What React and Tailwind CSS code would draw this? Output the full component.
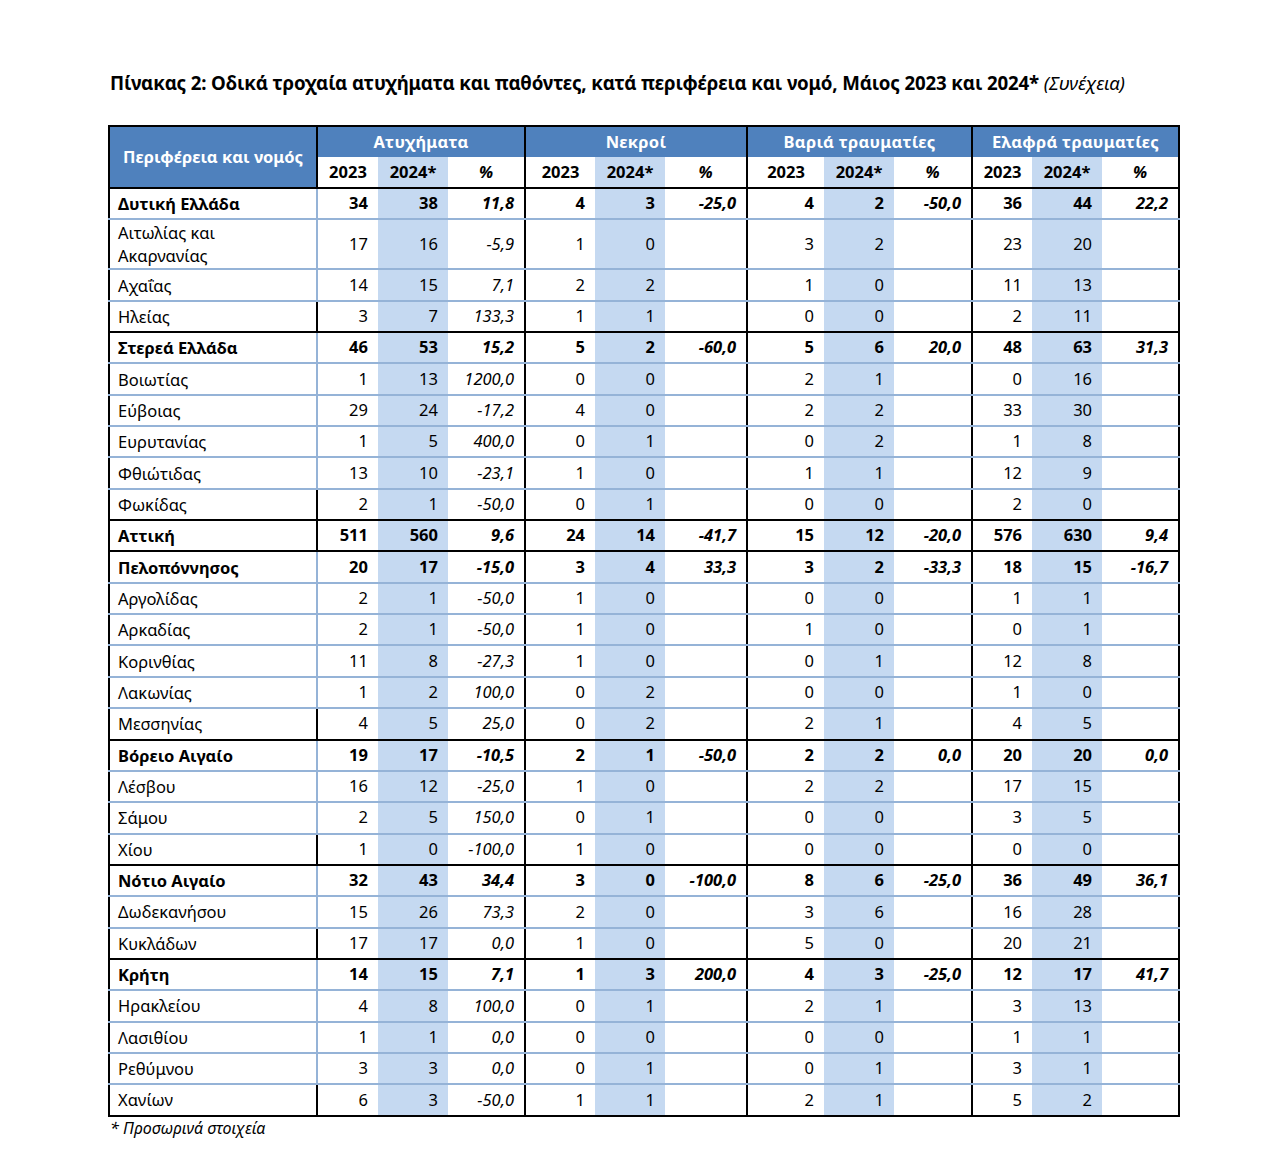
import React from "react";

const rows = [
  ["Δυτική Ελλάδα", true, ["34", "38", "11,8"], ["4", "3", "-25,0"], ["4", "2", "-50,0"], ["36", "44", "22,2"]],
  ["Αιτωλίας και Ακαρνανίας", false, ["17", "16", "-5,9"], ["1", "0", ""], ["3", "2", ""], ["23", "20", ""]],
  ["Αχαΐας", false, ["14", "15", "7,1"], ["2", "2", ""], ["1", "0", ""], ["11", "13", ""]],
  ["Ηλείας", false, ["3", "7", "133,3"], ["1", "1", ""], ["0", "0", ""], ["2", "11", ""]],
  ["Στερεά Ελλάδα", true, ["46", "53", "15,2"], ["5", "2", "-60,0"], ["5", "6", "20,0"], ["48", "63", "31,3"]],
  ["Βοιωτίας", false, ["1", "13", "1200,0"], ["0", "0", ""], ["2", "1", ""], ["0", "16", ""]],
  ["Εύβοιας", false, ["29", "24", "-17,2"], ["4", "0", ""], ["2", "2", ""], ["33", "30", ""]],
  ["Ευρυτανίας", false, ["1", "5", "400,0"], ["0", "1", ""], ["0", "2", ""], ["1", "8", ""]],
  ["Φθιώτιδας", false, ["13", "10", "-23,1"], ["1", "0", ""], ["1", "1", ""], ["12", "9", ""]],
  ["Φωκίδας", false, ["2", "1", "-50,0"], ["0", "1", ""], ["0", "0", ""], ["2", "0", ""]],
  ["Αττική", true, ["511", "560", "9,6"], ["24", "14", "-41,7"], ["15", "12", "-20,0"], ["576", "630", "9,4"]],
  ["Πελοπόννησος", true, ["20", "17", "-15,0"], ["3", "4", "33,3"], ["3", "2", "-33,3"], ["18", "15", "-16,7"]],
  ["Αργολίδας", false, ["2", "1", "-50,0"], ["1", "0", ""], ["0", "0", ""], ["1", "1", ""]],
  ["Αρκαδίας", false, ["2", "1", "-50,0"], ["1", "0", ""], ["1", "0", ""], ["0", "1", ""]],
  ["Κορινθίας", false, ["11", "8", "-27,3"], ["1", "0", ""], ["0", "1", ""], ["12", "8", ""]],
  ["Λακωνίας", false, ["1", "2", "100,0"], ["0", "2", ""], ["0", "0", ""], ["1", "0", ""]],
  ["Μεσσηνίας", false, ["4", "5", "25,0"], ["0", "2", ""], ["2", "1", ""], ["4", "5", ""]],
  ["Βόρειο Αιγαίο", true, ["19", "17", "-10,5"], ["2", "1", "-50,0"], ["2", "2", "0,0"], ["20", "20", "0,0"]],
  ["Λέσβου", false, ["16", "12", "-25,0"], ["1", "0", ""], ["2", "2", ""], ["17", "15", ""]],
  ["Σάμου", false, ["2", "5", "150,0"], ["0", "1", ""], ["0", "0", ""], ["3", "5", ""]],
  ["Χίου", false, ["1", "0", "-100,0"], ["1", "0", ""], ["0", "0", ""], ["0", "0", ""]],
  ["Νότιο Αιγαίο", true, ["32", "43", "34,4"], ["3", "0", "-100,0"], ["8", "6", "-25,0"], ["36", "49", "36,1"]],
  ["Δωδεκανήσου", false, ["15", "26", "73,3"], ["2", "0", ""], ["3", "6", ""], ["16", "28", ""]],
  ["Κυκλάδων", false, ["17", "17", "0,0"], ["1", "0", ""], ["5", "0", ""], ["20", "21", ""]],
  ["Κρήτη", true, ["14", "15", "7,1"], ["1", "3", "200,0"], ["4", "3", "-25,0"], ["12", "17", "41,7"]],
  ["Ηρακλείου", false, ["4", "8", "100,0"], ["0", "1", ""], ["2", "1", ""], ["3", "13", ""]],
  ["Λασιθίου", false, ["1", "1", "0,0"], ["0", "0", ""], ["0", "0", ""], ["1", "1", ""]],
  ["Ρεθύμνου", false, ["3", "3", "0,0"], ["0", "1", ""], ["0", "1", ""], ["3", "1", ""]],
  ["Χανίων", false, ["6", "3", "-50,0"], ["1", "1", ""], ["2", "1", ""], ["5", "2", ""]],
];

const groups = ["Ατυχήματα", "Νεκροί", "Βαριά τραυματίες", "Ελαφρά τραυματίες"];
const widths = [208, 61, 70, 77, 70, 70, 82, 77, 70, 78, 60, 70, 77];

export default function App() {
  return (
    <div
      className="bg-white min-h-[1151px] w-[1275px] pl-[108px] pt-[71px] text-black"
      style={{ fontFamily: '"Noto Sans", "Open Sans", sans-serif' }}
    >
      <h1 className="pl-[2px] text-[18.7px] font-bold leading-6 tracking-[-0.15px]">
        Πίνακας 2: Οδικά τροχαία ατυχήματα και παθόντες, κατά περιφέρεια και νομό, Μάιος 2023 και 2024*{" "}
        <span className="font-normal italic">(Συνέχεια)</span>
      </h1>

      <table className="mt-[30px] w-[1070px] table-fixed border-collapse border-2 border-black text-[16.5px]">
        <colgroup>
          {widths.map((w, i) => (
            <col key={i} style={{ width: w }} />
          ))}
        </colgroup>
        <thead>
          <tr className="h-[31px]">
            <th
              rowSpan={2}
              className="border-r-2 border-b-2 border-black bg-[#4f81bd] text-center font-bold text-white"
            >
              Περιφέρεια και νομός
            </th>
            {groups.map((g) => (
              <th
                key={g}
                colSpan={3}
                className="border-r-2 border-black bg-[#4f81bd] text-center font-bold tracking-[0.3px] text-white"
              >
                {g}
              </th>
            ))}
          </tr>
          <tr className="h-[31px]">
            {groups.map((g) => (
              <React.Fragment key={g}>
                <th className="border-b-2 border-black text-center font-bold">2023</th>
                <th className="border-b-2 border-black bg-[#c5d9f1] text-center font-bold">2024*</th>
                <th className="border-r-2 border-b-2 border-black text-center font-bold italic">%</th>
              </React.Fragment>
            ))}
          </tr>
        </thead>
        <tbody>
          {rows.map(([name, bold, ...vals], i) => {
            const next = rows[i + 1];
            const line = !next ? "border-black" : next[1] ? "border-black" : "border-[#95b3d7]";
            const two = name.length > 20;
            return (
              <tr key={name} className={two ? "h-[50px]" : "h-[31.35px]"}>
                <td
                  className={`border-r-2 border-b-2 ${line} pl-[8px] pr-2 leading-[23px] ${
                    bold ? "font-bold" : ""
                  }`}
                >
                  {two ? (
                    <>
                      Αιτωλίας και
                      <br />
                      Ακαρνανίας
                    </>
                  ) : (
                    name
                  )}
                </td>
                {vals.map((g, j) => (
                  <React.Fragment key={j}>
                    <td className={`border-b-2 ${line} pr-[10px] text-right ${bold ? "font-bold" : ""}`}>
                      {g[0]}
                    </td>
                    <td
                      className={`border-b-2 ${line} bg-[#c5d9f1] pr-[10px] text-right ${
                        bold ? "font-bold" : ""
                      }`}
                    >
                      {g[1]}
                    </td>
                    <td
                      className={`border-r-2 border-b-2 ${line} border-r-black pr-[10px] text-right italic ${
                        bold ? "font-bold" : ""
                      }`}
                    >
                      {g[2]}
                    </td>
                  </React.Fragment>
                ))}
              </tr>
            );
          })}
        </tbody>
      </table>

      <p className="pl-[2px] pt-[1px] text-[16px] italic leading-5">* Προσωρινά στοιχεία</p>
    </div>
  );
}
